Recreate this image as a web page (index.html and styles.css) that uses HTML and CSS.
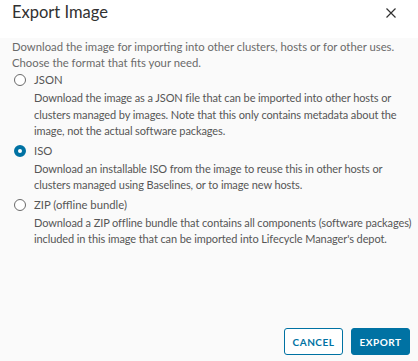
FILE: index.html
```html
<!DOCTYPE html>
<html>
<head>
<meta charset="utf-8">
<link rel="stylesheet" href="styles.css">
</head>
<body>
<div class="modal">
  <div class="header">
    <h3 class="title">Export Image</h3>
    <button class="close" aria-label="Close">
      <svg width="12" height="12" viewBox="0 0 12 12"><path d="M1.5 1.5 L10.5 10.5 M10.5 1.5 L1.5 10.5" stroke="#313131" stroke-width="1.2" fill="none"/></svg>
    </button>
  </div>
  <div class="body">
    <p class="intro">Download the image for importing into other clusters, hosts or for other uses. Choose the format that fits your need.</p>
    <div class="option">
      <span class="radio"></span>
      <div class="opt-text">
        <div class="label">JSON</div>
        <div class="desc">Download the image as a JSON file that can be imported into other hosts or clusters managed by images. Note that this only contains metadata about the image, not the actual software packages.</div>
      </div>
    </div>
    <div class="option">
      <span class="radio checked"></span>
      <div class="opt-text">
        <div class="label">ISO</div>
        <div class="desc">Download an installable ISO from the image to reuse this in other hosts or clusters managed using Baselines, or to image new hosts.</div>
      </div>
    </div>
    <div class="option">
      <span class="radio"></span>
      <div class="opt-text">
        <div class="label">ZIP (offline bundle)</div>
        <div class="desc">Download a ZIP offline bundle that contains all components (software packages) included in this image that can be imported into Lifecycle Manager's depot.</div>
      </div>
    </div>
  </div>
  <div class="footer">
    <button class="btn btn-outline">CANCEL</button>
    <button class="btn btn-primary">EXPORT</button>
  </div>
</div>
</body>
</html>
```
FILE: styles.css
```css
html, body {
  margin: 0;
  padding: 0;
  background: #fff;
}
body {
  font-family: "Lato", "Open Sans", sans-serif;
  width: 418px;
  height: 361px;
  overflow: hidden;
}
.modal {
  display: flex;
  flex-direction: column;
  height: 361px;
}
.header {
  display: flex;
  justify-content: space-between;
  align-items: flex-start;
  padding: 1px 21px 0 12px;
  height: 38px;
  box-sizing: border-box;
  background: #fff;
}
.title {
  margin: 0;
  font-weight: 400;
  font-size: 16.5px;
  line-height: 22px;
  color: #313131;
}
.close {
  border: none;
  background: none;
  padding: 0;
  margin-top: 6px;
  width: 12px;
  height: 12px;
  display: flex;
}
.body {
  background: #fafafa;
  padding: 1px 4px 0 12px;
  flex: 1;
}
.intro {
  margin: 0;
  font-size: 11.3px;
  line-height: 16px;
  color: #6a6a6a;
}
.option {
  display: flex;
  gap: 8px;
  padding-left: 2px;
}
.radio {
  width: 12px;
  height: 12px;
  border: 1px solid #6a6a6a;
  border-radius: 50%;
  margin-top: 3px;
  flex: none;
  box-sizing: border-box;
  background: #fff;
}
.radio.checked {
  border: 4px solid #0072a3;
  background: #fff;
}
.opt-text {
  flex: 1;
}
.label {
  font-size: 11.3px;
  line-height: 17px;
  color: #565656;
}
.desc {
  font-size: 11px;
  letter-spacing: -0.1px;
  line-height: 16.5px;
  color: #565656;
  margin-top: 2px;
  margin-bottom: 2px;
}
.footer {
  display: flex;
  justify-content: flex-end;
  gap: 8px;
  padding: 12px 8px 6px 0;
  height: 45px;
  box-sizing: border-box;
  align-items: flex-start;
  background: #fafafa;
}
.btn {
  height: 27px;
  width: 59px;
  border-radius: 3px;
  font-family: "Lato", sans-serif;
  font-weight: 700;
  font-size: 10px;
  letter-spacing: 0.5px;
  padding: 0;
}
.btn-outline {
  background: #fff;
  border: 1px solid #0072a3;
  color: #0072a3;
}
.btn-primary {
  background: #0072a3;
  border: 1px solid #0072a3;
  color: #fff;
}
```
